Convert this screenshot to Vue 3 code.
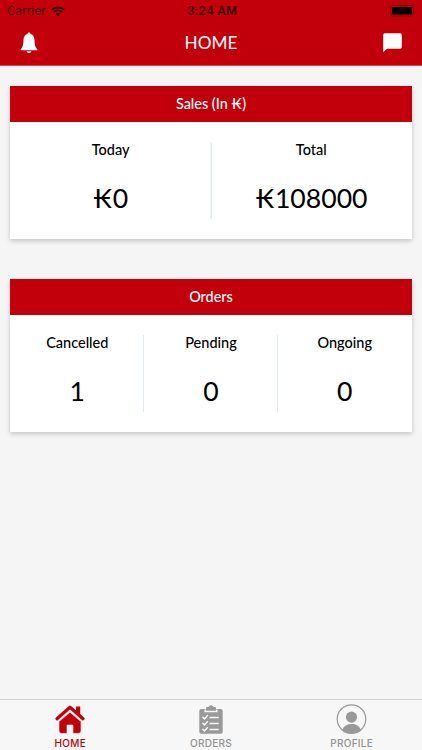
<script setup>
const cards = [
  {
    title: 'Sales (In ₭)',
    stats: [
      { label: 'Today', value: '₭0' },
      { label: 'Total', value: '₭108000' },
    ],
  },
  {
    title: 'Orders',
    stats: [
      { label: 'Cancelled', value: '1' },
      { label: 'Pending', value: '0' },
      { label: 'Ongoing', value: '0' },
    ],
  },
]
</script>

<template>
  <div class="screen">
    <header class="top">
      <div class="status">
        <div class="carrier">
          <span>Carrier</span>
          <svg class="wifi" viewBox="0 0 14 10" width="14" height="10">
            <path d="M0.9 3.9a8.6 8.6 0 0 1 12.2 0" />
            <path d="M3 6.1a5.6 5.6 0 0 1 8 0" />
            <path class="dot" d="M4.9 7.9a3 3 0 0 1 4.2 0L7 10z" />
          </svg>
        </div>
        <div class="clock">3:24 AM</div>
        <svg class="battery" viewBox="0 0 27 12" width="27" height="12">
          <rect class="shell" x="0.5" y="0.5" width="23" height="10.5" rx="2.6" />
          <rect x="2" y="2" width="20" height="7.5" rx="1" />
          <path class="tip" d="M25 4v3.6c1.6-.5 1.6-3.1 0-3.6z" />
        </svg>
      </div>
      <div class="nav">
        <svg class="bell" viewBox="0 0 18 22" width="18" height="22">
          <path d="M9 .4c1 0 1.500.7 1.500 1.700 2.800.8 3.900 3.100 4 6 .1 4.500.6 7.200 2.900 9.400v.8H.6v-.8c2.300-2.200 2.800-4.900 2.900-9.400.1-2.900 1.200-5.200 4-6 0-1 .5-1.700 1.500-1.700z" />
          <path d="M6.700 19.200h4.600c-.3 1.200-1.200 1.900-2.300 1.900s-2-.7-2.300-1.900z" />
        </svg>
        <h1>HOME</h1>
        <svg class="chat" viewBox="0 0 19 20" width="19" height="20">
          <path d="M1.900.3h15.200q1.700 0 1.700 1.700v12q0 1.700-1.700 1.700H4L.2 19.300V2Q.2.3 1.900.3z" />
        </svg>
      </div>
    </header>

    <main>
      <section v-for="card in cards" :key="card.title" class="card">
        <h2>{{ card.title }}</h2>
        <div class="stats">
          <div v-for="stat in card.stats" :key="stat.label" class="stat">
            <div class="label">{{ stat.label }}</div>
            <div class="value">{{ stat.value }}</div>
          </div>
        </div>
      </section>
    </main>

    <nav class="tabs">
      <a class="tab active">
        <svg viewBox="0 0 32 30" width="32" height="30">
          <path class="house" d="M16 7.200 27 16.600V26q0 2.400-2.400 2.400H19v-8.400h-6v8.400H7.400Q5 28.400 5 26V16.600z" />
          <path class="roof" d="M3 13.700 16 2.200l13 11.500" />
          <path d="M22 1.400h4.200v8.800L22 6.400z" />
        </svg>
        <span>HOME</span>
      </a>
      <a class="tab">
        <svg viewBox="0 0 32 30" width="32" height="30">
          <path d="M6.300 4H11V3q0-1 1-1h1.500Q14 .2 16 .2T18.500 2H20q1 0 1 1v1h4.700q2 0 2 2v20.700q0 2-2 2H6.300q-2 0-2-2V6q0-2 2-2z" />
          <path class="cut" d="M10.200 4.500v1.900h11.600V4.500M7.500 12l2 1.900 3.300-3.600M7.500 18l2 1.900 3.300-3.600M7.500 24l2 1.900 3.300-3.600M14.500 12.600h9.200M14.500 18.600h9.200M14.500 24.600h9.200" />
        </svg>
        <span>ORDERS</span>
      </a>
      <a class="tab">
        <svg viewBox="0.5 0.6 32 30" width="32" height="30">
          <circle class="ring" cx="16" cy="14.700" r="14.300" />
          <circle cx="16" cy="12.700" r="5.600" />
          <path d="M6.800 25.300C8.200 21.500 11.500 19.600 16 19.600s7.800 1.900 9.200 5.700C22.600 27.800 19.500 29 16 29s-6.600-1.200-9.200-3.700z" />
        </svg>
        <span>PROFILE</span>
      </a>
    </nav>
  </div>
</template>

<style>
body {
  margin: 0;
}
</style>

<style scoped>
.screen {
  display: flex;
  flex-direction: column;
  width: 422px;
  height: 750px;
  background: #f5f5f5;
  font-family: Lato, "Noto Sans", sans-serif;
  color: #000;
}
.top {
  box-sizing: border-box;
  height: 66px;
  background: #c2000b;
  border-bottom: 1px solid #cf4850;
}
.status {
  display: grid;
  grid-template-columns: 1fr auto 1fr;
  height: 22px;
  padding: 0 5px 0 7px;
  align-items: center;
  font-family: Inter, sans-serif;
  font-size: 12px;
  color: #3d0003;
}
.carrier {
  display: flex;
  gap: 5px;
  align-items: center;
  font-size: 11.5px;
  letter-spacing: 0.15px;
}
.wifi {
  fill: none;
  stroke: #240002;
  stroke-width: 1.9;
}
.wifi .dot {
  fill: #240002;
  stroke: none;
}
.clock {
  font-size: 11.8px;
  font-weight: 600;
  letter-spacing: 0.2px;
}
.battery {
  justify-self: end;
  fill: #000;
}
.battery .shell {
  fill: none;
  stroke: #86000a;
}
.battery .tip {
  fill: #86000a;
}
.nav {
  display: grid;
  grid-template-columns: 19px 1fr 19px;
  align-items: center;
  height: 41px;
  padding: 0 20px;
  fill: #fff;
}
h1 {
  margin: 0;
  text-align: center;
  font-size: 17.2px;
  font-weight: 400;
  line-height: 22px;
  color: #fff;
}
main {
  flex: 1;
  display: flex;
  flex-direction: column;
  gap: 40.5px;
  padding: 20px 10.4px 0;
}
.card {
  background: #fff;
  box-shadow: 0 2px 5px rgba(0, 0, 0, 0.2);
}
h2 {
  margin: 0;
  background: #c2000b;
  color: #fff;
  text-align: center;
  font-size: 14.4px;
  font-weight: 500;
  line-height: 35.5px;
}
.stats {
  display: flex;
  padding: 20px 0;
}
.stat {
  flex: 1;
  height: 77px;
  text-align: center;
}
.stat + .stat {
  box-shadow: -1px 0 0 #e1ebf4;
}
.stat:nth-child(2):last-child {
  box-shadow: -1px 0 0 #eef7fb, inset 1px 0 0 #e1eef8;
}
.label {
  font-size: 14.5px;
  font-weight: 500;
  line-height: 16px;
}
.value {
  margin-top: 22px;
  font-size: 26.6px;
  line-height: 36px;
}
.tabs {
  box-sizing: border-box;
  display: flex;
  height: 51px;
  border-top: 1px solid #d3d3d3;
  background: #f7f7f7;
}
.tab {
  flex: 1;
  display: flex;
  flex-direction: column;
  align-items: center;
  padding-top: 5px;
  font-family: Inter, sans-serif;
  font-size: 10px;
  font-weight: 500;
  line-height: 16px;
  letter-spacing: 0.3px;
  color: #929292;
  fill: #999;
}
.tab svg {
  overflow: visible;
}
.tab.active {
  color: #c2000b;
  fill: #c2000b;
}
.house {
  stroke: #f7f7f7;
  stroke-width: 0.6;
}
.roof {
  fill: none;
  stroke: #c2000b;
  stroke-width: 3.2;
  stroke-linecap: round;
  stroke-linejoin: round;
}
.cut {
  fill: none;
  stroke: #f7f7f7;
  stroke-width: 1.5;
}
.ring {
  fill: none;
  stroke: #999;
  stroke-width: 1.2;
}
</style>
